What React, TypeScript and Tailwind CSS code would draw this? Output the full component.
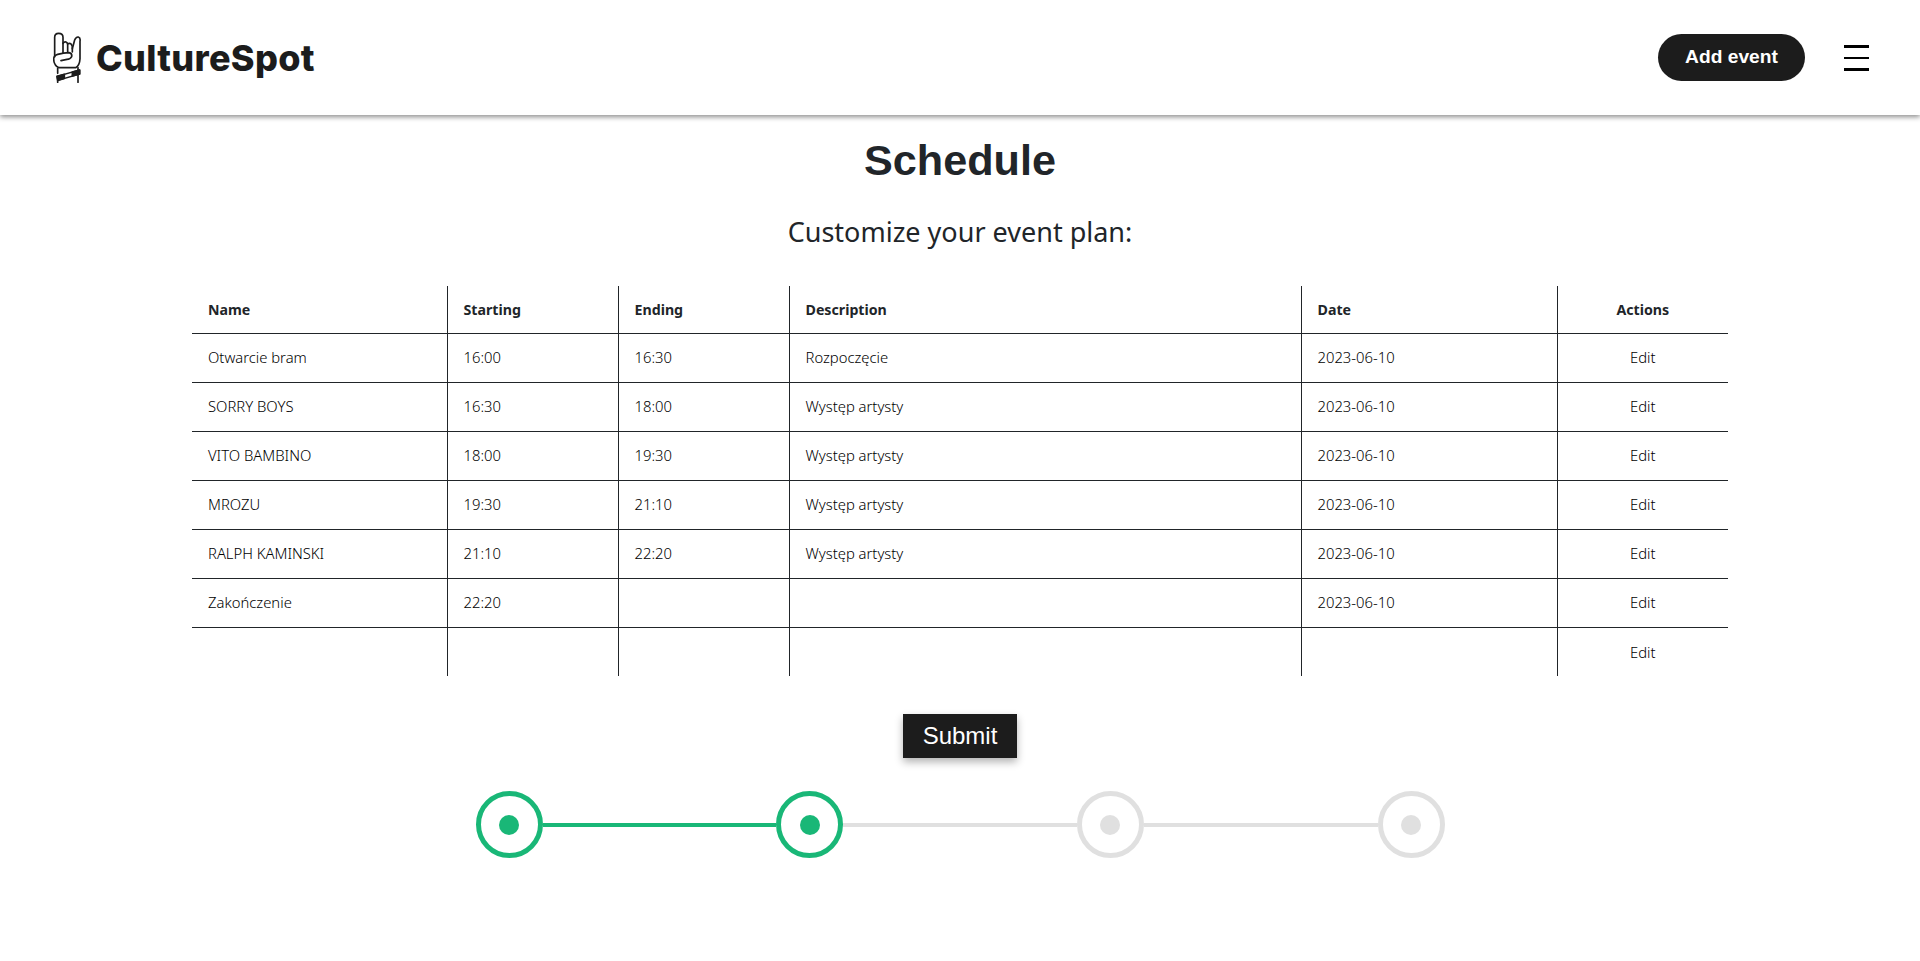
const rows = [
  ["Otwarcie bram", "16:00", "16:30", "Rozpoczęcie", "2023-06-10"],
  ["SORRY BOYS", "16:30", "18:00", "Występ artysty", "2023-06-10"],
  ["VITO BAMBINO", "18:00", "19:30", "Występ artysty", "2023-06-10"],
  ["MROZU", "19:30", "21:10", "Występ artysty", "2023-06-10"],
  ["RALPH KAMINSKI", "21:10", "22:20", "Występ artysty", "2023-06-10"],
  ["Zakończenie", "22:20", "", "", "2023-06-10"],
  ["", "", "", "", ""],
];

function Logo() {
  return (
    <svg width="29" height="51" viewBox="158 98 87 153" fill="none" stroke="#1c1c1c" strokeWidth="5" strokeLinejoin="round" strokeLinecap="round">
      <path d="M163 172 V114 Q163 102 175 102 Q188 102 188 114 V160" />
      <path d="M188 132 Q192 126 197 128 Q202 130 202 136 V158 M202 134 Q208 130 212 134 Q217 138 216 148 V158" />
      <path d="M216 148 L223 122 Q227 112 234 113 Q241 115 239 126 V178 Q238 198 226 205 H176 Q160 198 160 178 Q161 168 172 165 Q190 160 206 160 Q216 162 214 172 Q210 180 200 180 L182 184" />
      <path d="M172 207 V222 M233 205 V212" />
      <path d="M170 231 L238 212 V224 L172 243 Z" strokeWidth="4" />
      <path d="M170 231 L192 225 V237 L172 243 Z" fill="#1c1c1c" />
      <path d="M216 218 L238 212 V224 L216 230 Z" fill="#1c1c1c" />
      <path d="M172 243 V249 M233 226 V249" />
    </svg>
  );
}

function Step({ active }: { active: boolean }) {
  return (
    <div className={`flex h-[67px] w-[67px] shrink-0 items-center justify-center rounded-full border-[5px] ${active ? "border-[#19b777]" : "border-[#e0e0e0]"}`}>
      <div className={`h-5 w-5 rounded-full ${active ? "bg-[#19b777]" : "bg-[#e0e0e0]"}`} />
    </div>
  );
}

export default function App() {
  const head = "h-[47px] px-4 text-[14.2px] font-bold text-[#212529] border-b border-[#212529]";
  const cell = "h-[49px] px-4 text-[14.8px] font-light text-black";
  return (
    <div className="min-h-[961px] bg-white font-['Noto_Sans',sans-serif] text-[#212529]">
      <header className="flex h-[115px] items-center justify-between pl-[53px] pr-[51px] shadow-[0_2px_5px_rgba(0,0,0,0.45)]">
        <div className="flex items-center gap-[14px]">
          <Logo />
          <span className="font-['Inter',sans-serif] text-[36px] font-extrabold tracking-[0.3px] text-[#1c1c1c]">CultureSpot</span>
        </div>
        <div className="flex items-center gap-[39px]">
          <button className="h-[47px] w-[147px] rounded-full bg-[#1c1c1c] font-['Liberation_Sans',sans-serif] text-[19.2px] font-bold text-white">Add event</button>
          <div className="flex w-[25px] flex-col gap-[9px]">
            <div className="h-[3px] bg-black" />
            <div className="h-[2px] bg-black" />
            <div className="h-[3px] bg-black" />
          </div>
        </div>
      </header>
      <main className="flex flex-col items-center">
        <h1 className="mt-[19px] font-['Liberation_Sans',sans-serif] text-[43.2px] leading-[53px] font-bold text-[#212529]">Schedule</h1>
        <p className="mt-[24px] text-[27px] leading-[42px]">Customize your event plan:</p>
        <table className="mt-[33px] w-[1536px] table-fixed border-collapse">
          <colgroup>
            <col className="w-[255px]" />
            <col className="w-[171px]" />
            <col className="w-[171px]" />
            <col className="w-[512px]" />
            <col className="w-[256px]" />
            <col className="w-[171px]" />
          </colgroup>
          <thead>
            <tr>
              <th className={`${head} border-r text-left`}>Name</th>
              <th className={`${head} border-r text-left`}>Starting</th>
              <th className={`${head} border-r text-left`}>Ending</th>
              <th className={`${head} border-r text-left`}>Description</th>
              <th className={`${head} border-r text-left`}>Date</th>
              <th className={`${head} text-center`}>Actions</th>
            </tr>
          </thead>
          <tbody>
            {rows.map((r, i) => (
              <tr key={i} className={i < rows.length - 1 ? "border-b border-[#212529]" : ""}>
                {r.map((c, j) => (
                  <td key={j} className={`${cell} border-r border-[#212529]`}>{c}</td>
                ))}
                <td className={`${cell} text-center`}>Edit</td>
              </tr>
            ))}
          </tbody>
        </table>
        <button className="mt-[38px] h-[44px] w-[114px] bg-[#1c1c1c] font-['Liberation_Sans',sans-serif] text-[24px] text-white shadow-[0_4px_8px_rgba(0,0,0,0.3)]">Submit</button>
        <div className="mt-[33px] flex w-[969px] items-center">
          <Step active />
          <div className="h-1 flex-1 bg-[#19b777]" />
          <Step active />
          <div className="h-1 flex-1 bg-[#e0e0e0]" />
          <Step active={false} />
          <div className="h-1 flex-1 bg-[#e0e0e0]" />
          <Step active={false} />
        </div>
      </main>
    </div>
  );
}
